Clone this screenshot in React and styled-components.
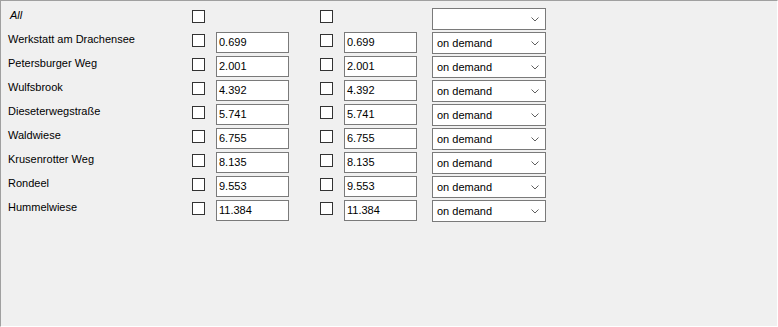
import React from "react";
import styled, { createGlobalStyle } from "styled-components";

const Global = createGlobalStyle`
  html, body { margin: 0; padding: 0; background: #f0f0f0; }
  body { font-family: "Liberation Sans", Arial, sans-serif; font-size: 11px; color: #000; }
`;

const Panel = styled.div`
  box-sizing: border-box;
  width: 778px;
  height: 327px;
  background: #f0f0f0;
  border-top: 1px solid #a0a0a0;
  border-left: 1px solid #a0a0a0;
  border-right: 1px solid #ffffff;
  border-bottom: 1px solid #ffffff;
  padding: 7px 0 0 7px;
`;

const Grid = styled.div`
  display: grid;
  grid-template-columns: 184px 24px 73px 31px 24px 73px 15px 114px;
  grid-auto-rows: 22px;
  row-gap: 2px;
  align-items: start;
`;

const Label = styled.div`
  font-size: 11px;
  line-height: 13px;
  padding-top: 1px;
  padding-left: ${(p) => (p.$italic ? "2px" : "0")};
  font-style: ${(p) => (p.$italic ? "italic" : "normal")};
  white-space: nowrap;
`;

const Check = styled.div`
  box-sizing: border-box;
  width: 13px;
  height: 13px;
  margin-top: 2px;
  border: 1px solid #333333;
  background: #ffffff;
`;

const TextBox = styled.div`
  box-sizing: border-box;
  height: 21px;
  border: 1px solid #7a7a7a;
  background: #ffffff;
  padding: 0 2px;
  line-height: 19px;
  font-size: 11px;
`;

const Combo = styled.div`
  box-sizing: border-box;
  height: 22px;
  border: 1px solid #7a7a7a;
  background: #ffffff;
  display: flex;
  align-items: center;
  justify-content: space-between;
  padding: 0 6px 0 4px;
  font-size: 11px;
`;

const Spacer = styled.div``;

const Chevron = () => (
  <svg width="8" height="5" viewBox="0 0 8 5" style={{ display: "block" }}>
    <polyline points="0.5,0.5 4,4 7.5,0.5" fill="none" stroke="#606060" strokeWidth="1" />
  </svg>
);

const rows = [
  ["Werkstatt am Drachensee", "0.699"],
  ["Petersburger Weg", "2.001"],
  ["Wulfsbrook", "4.392"],
  ["Dieseterwegstraße", "5.741"],
  ["Waldwiese", "6.755"],
  ["Krusenrotter Weg", "8.135"],
  ["Rondeel", "9.553"],
  ["Hummelwiese", "11.384"],
];

export default function App() {
  return (
    <>
      <Global />
      <Panel>
        <Grid>
          <Label $italic>All</Label>
          <Check />
          <Spacer />
          <Spacer />
          <Check />
          <Spacer />
          <Spacer />
          <Combo>
            <span />
            <Chevron />
          </Combo>
          {rows.map(([name, val]) => (
            <React.Fragment key={name}>
              <Label>{name}</Label>
              <Check />
              <TextBox>{val}</TextBox>
              <Spacer />
              <Check />
              <TextBox>{val}</TextBox>
              <Spacer />
              <Combo>
                <span>on demand</span>
                <Chevron />
              </Combo>
            </React.Fragment>
          ))}
        </Grid>
      </Panel>
    </>
  );
}
